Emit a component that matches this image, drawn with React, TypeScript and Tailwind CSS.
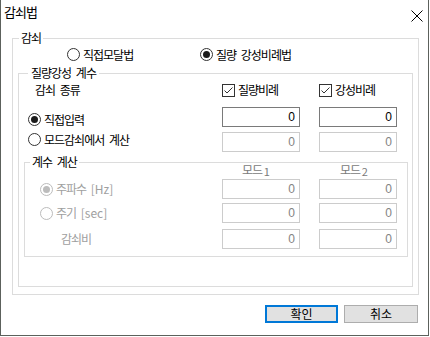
const Radio = ({ checked = false, disabled = false }: { checked?: boolean; disabled?: boolean }) => (
  <span
    className={`w-[13px] h-[13px] shrink-0 rounded-full border bg-white flex items-center justify-center ${
      disabled ? "border-[#bcbcbc]" : "border-[#333333]"
    }`}
  >
    {checked && <span className={`w-[7px] h-[7px] rounded-full ${disabled ? "bg-[#bcbcbc]" : "bg-[#1b1b1b]"}`} />}
  </span>
);

const Check = () => (
  <span className="w-[13px] h-[13px] shrink-0 border border-[#333333] bg-white flex items-center justify-center">
    <svg width="11" height="11" viewBox="0 0 11 11">
      <path d="M1.5 5.5 L4 8 L9.5 2.5" fill="none" stroke="#333333" strokeWidth="1" />
    </svg>
  </span>
);

const Field = ({ disabled = false }: { disabled?: boolean }) => (
  <div
    className={`w-[78px] h-[20px] shrink-0 border bg-white flex items-center justify-end pr-[4px] font-['Liberation_Sans',sans-serif] text-[12px] tracking-normal ${
      disabled ? "border-[#cccccc] text-[#838383]" : "border-[#7a7a7a] text-black"
    }`}
  >
    0
  </div>
);

export default function App() {
  return (
    <div className="w-[430px] h-[337px] bg-white font-['Noto_Sans_CJK_KR',sans-serif] text-[12px] tracking-[-1px] [word-spacing:3px] text-black">
      <div className="w-[429px] h-[336px] border-x border-b border-[#5c615c] flex flex-col">
        {/* Title bar */}
        <div className="h-[31px] flex justify-between">
          <span className="pl-[3px] pt-[3px] text-[13px] leading-[17px]">감쇠법</span>
          <svg width="12" height="12" viewBox="0 0 12 12" className="mt-[10px] mr-[5px]">
            <path d="M0.5 0.5 L11.5 11.5 M11.5 0.5 L0.5 11.5" stroke="#000" strokeWidth="1" />
          </svg>
        </div>

        <div className="pl-[11px] pr-[9px]">
          <fieldset className="border border-[#dcdcdc] h-[264px] min-w-0">
            <legend className="ml-[6px] px-[2px] leading-[14px]">감쇠</legend>

            <div className="mt-[3px] mb-[5px] h-[13px] flex items-center leading-[13px]">
              <label className="ml-[54px] w-[133px] flex items-center gap-[3px]">
                <Radio />
                <span>직접모달법</span>
              </label>
              <label className="flex items-center gap-[3px]">
                <Radio checked />
                <span>질량 강성비례법</span>
              </label>
            </div>

            <fieldset className="mx-[5px] border border-[#dcdcdc] h-[221px] min-w-0">
              <legend className="ml-[9px] px-[3px] leading-[14px]">질량강성 계수</legend>

              <div className="mt-[3px] h-[14px] flex items-center">
                <span className="w-[203px] pl-[16px]">감쇠 종류</span>
                <label className="w-[97px] flex items-center gap-[3px]">
                  <Check />
                  <span>질량비례</span>
                </label>
                <label className="flex items-center gap-[3px]">
                  <Check />
                  <span>강성비례</span>
                </label>
              </div>

              <div className="mt-[10px] flex items-start">
                <label className="w-[203px] pl-[9px] mt-[6px] h-[13px] flex items-center gap-[3px]">
                  <Radio checked />
                  <span>직접입력</span>
                </label>
                <div className="flex gap-[19px]">
                  <Field />
                  <Field />
                </div>
              </div>

              <div className="mt-[5px] flex items-start">
                <label className="w-[203px] pl-[9px] mt-[1px] h-[13px] flex items-center gap-[3px]">
                  <Radio />
                  <span>모드감쇠에서 계산</span>
                </label>
                <div className="flex gap-[19px]">
                  <Field disabled />
                  <Field disabled />
                </div>
              </div>

              <fieldset className="mt-[3px] ml-[5px] mr-[4px] border border-[#dcdcdc] h-[102px] min-w-0">
                <legend className="ml-[5px] px-[2px] leading-[14px]">계수 계산</legend>

                <div className="-mt-[6px] h-[14px] flex text-[#7a7a7a] leading-[14px] [word-spacing:0px]">
                  <span className="w-[197px]" />
                  <span className="w-[97px] pl-[20px]">
                    모드 <span className="text-[11px] tracking-normal relative top-[1px]">1</span>
                  </span>
                  <span className="pl-[21px]">
                    모드 <span className="text-[11px] tracking-normal relative top-[1px]">2</span>
                  </span>
                </div>

                <div className="mt-[2px] flex items-center">
                  <label className="w-[197px] pl-[15px] flex items-center gap-[3px] text-[#a0a0a0]">
                    <Radio checked disabled />
                    <span>
                      주파수 <span className="tracking-normal">[Hz]</span>
                    </span>
                  </label>
                  <div className="flex gap-[19px]">
                    <Field disabled />
                    <Field disabled />
                  </div>
                </div>

                <div className="mt-[4px] flex items-center">
                  <label className="w-[197px] pl-[15px] flex items-center gap-[3px] text-[#a0a0a0]">
                    <Radio disabled />
                    <span>
                      주기 <span className="tracking-normal">[sec]</span>
                    </span>
                  </label>
                  <div className="flex gap-[19px]">
                    <Field disabled />
                    <Field disabled />
                  </div>
                </div>

                <div className="mt-[6px] flex items-center">
                  <span className="w-[197px] pl-[36px] text-[#a0a0a0]">감쇠비</span>
                  <div className="flex gap-[19px]">
                    <Field disabled />
                    <Field disabled />
                  </div>
                </div>
              </fieldset>
            </fieldset>
          </fieldset>

          {/* Buttons */}
          <div className="mt-[10px] mr-[1px] flex justify-end gap-[6px] text-[12px] tracking-normal">
            <button className="w-[73px] h-[18px] border-2 border-[#0078d7] bg-[#e1e1e1] flex items-center justify-center leading-none">
              확인
            </button>
            <button className="w-[74px] h-[18px] border border-[#adadad] bg-[#e1e1e1] flex items-center justify-center leading-none">
              취소
            </button>
          </div>
        </div>
      </div>
    </div>
  );
}
